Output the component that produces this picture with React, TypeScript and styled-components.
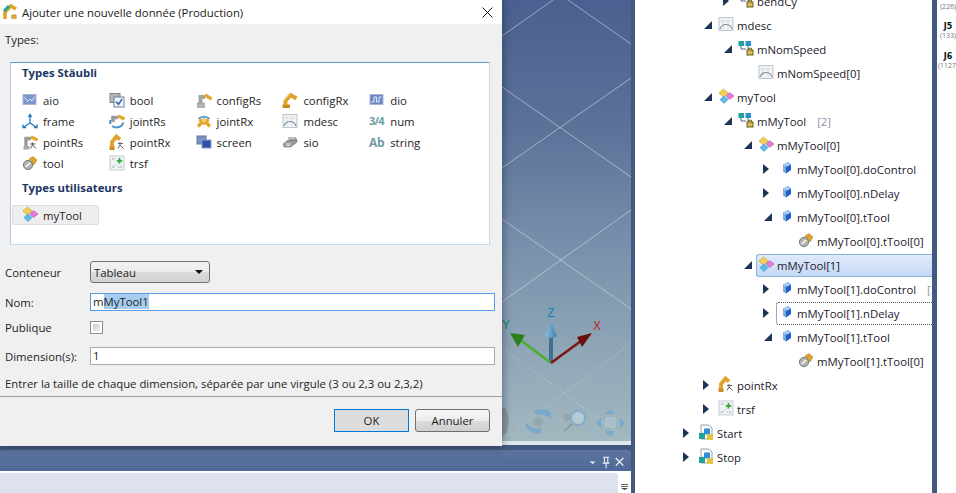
import React from 'react'
import styled, { createGlobalStyle } from 'styled-components'

const GlobalStyle = createGlobalStyle`
  html, body {
    margin: 0;
    padding: 0;
    background: #fff;
  }
  body {
    font-family: "Open Sans", "Noto Sans", "Liberation Sans", sans-serif;
    font-size: 11.35px;
    color: #1e1e1e;
  }
`

const Page = styled.div`
  display: flex;
  width: 956px;
  height: 493px;
  overflow: hidden;
  background: #44597f;
`

const LeftColumn = styled.div`
  position: relative;
  display: flex;
  flex-direction: column;
  width: 631px;
  flex: none;
`

const Viewport = styled.div`
  position: relative;
  flex: 1;
  border-bottom: 4px solid #dfe7ec;
  background: linear-gradient(180deg, #4a6090 0%, #5b7399 30%, #7a93ad 58%, #a2b8c0 100%);
  overflow: hidden;
`

const SceneSvg = styled.svg`
  position: absolute;
  top: 0;
  left: 0;
`

const DockTitle = styled.div`
  margin-top: 5px;
  height: 21px;
  flex: none;
  display: flex;
  align-items: center;
  justify-content: flex-end;
  padding-right: 2px;
  gap: 3px;
  border-radius: 3px 3px 0 0;
  background: linear-gradient(180deg, #5d749f, #4f6997);
  border-bottom: 1px solid #fff;
`

const DockBody = styled.div`
  display: flex;
  height: 20px;
  flex: none;
  background: #fff;
  padding-top: 1px;
`

const DockContent = styled.div`
  width: 618px;
  background: #dee2ee;
  border-radius: 0 3px 0 0;
`

const DockScroll = styled.div`
  flex: 1;
  display: flex;
  justify-content: center;
  padding-top: 11px;
`

const Dialog = styled.div`
  position: absolute;
  top: 0;
  left: 0;
  z-index: 2;
  width: 502px;
  height: 446px;
  background: #f0f0f0;
  box-shadow: 0 0 9px rgba(20, 30, 50, 0.55);
  display: flex;
  flex-direction: column;
`

const TitleBar = styled.div`
  height: 24px;
  flex: none;
  background: #fff;
  display: flex;
  align-items: center;
  padding-left: 3px;
  gap: 4px;
`

const TitleText = styled.span`
  flex: 1;
  color: #1a1a1a;
`

const CloseButton = styled.div`
  width: 11px;
  height: 11px;
  margin-right: 9px;
  display: flex;
`

const DialogBody = styled.div`
  flex: none;
  display: flex;
  flex-direction: column;
  padding: 0 7px 0 5px;
`

const TypesLabel = styled.div`
  height: 38px;
  line-height: 32px;
  flex: none;
`

const TypesPanel = styled.div`
  margin-left: 5px;
  margin-right: 5px;
  height: 183px;
  box-sizing: border-box;
  flex: none;
  background: #fff;
  border: 1px solid #c5dcee;
  border-top-color: #5f9dcf;
  border-left-color: #a9cbe6;
  padding-left: 11px;
`

const GroupTitle = styled.div<{ $top: number }>`
  margin-top: ${(p) => p.$top}px;
  height: 20px;
  line-height: 20px;
  font-weight: 700;
  color: #1d3564;
`

const TypeGrid = styled.div`
  margin-top: 7px;
  display: grid;
  grid-template-columns: repeat(5, 86.8px);
  grid-auto-rows: 21px;
`

const TypeItem = styled.div`
  display: flex;
  align-items: center;
  gap: 5px;
`

const UserTypeButton = styled.div`
  margin: 7px 0 0 -10px;
  width: 87px;
  height: 20px;
  box-sizing: border-box;
  display: flex;
  align-items: center;
  gap: 5px;
  padding-left: 9px;
  border: 1px solid #dcdcdc;
  border-radius: 2px;
  background: #eeeeee;
`

const FormRow = styled.div<{ $top: number }>`
  margin-top: ${(p) => p.$top}px;
  display: grid;
  grid-template-columns: 85px 405px;
  align-items: center;
  line-height: 13px;
`

const ComboBox = styled.div`
  width: 120px;
  height: 22px;
  box-sizing: border-box;
  display: flex;
  align-items: center;
  justify-content: space-between;
  padding: 0 6px 0 3px;
  border: 1px solid #707070;
  border-radius: 3px;
  background: linear-gradient(180deg, #f2f2f2 0%, #ebebeb 50%, #dcdcdc 50%, #d2d2d2 100%);
`

const ComboArrow = styled.span`
  width: 0;
  height: 0;
  border-left: 4px solid transparent;
  border-right: 4px solid transparent;
  border-top: 4px solid #111;
`

const TextField = styled.div<{ $focused?: boolean }>`
  height: 18px;
  box-sizing: border-box;
  background: #fff;
  border: 1px solid ${(p) => (p.$focused ? '#569de5' : '#ababab')};
  padding-left: 2px;
  line-height: 16px;
  white-space: nowrap;
`

const Selection = styled.span`
  background: #a6cdf0;
`

const CheckBox = styled.div`
  width: 13px;
  height: 13px;
  box-sizing: border-box;
  border: 1px solid #8e8f8f;
  background: #fff;
  padding: 2px;
  &::after {
    content: '';
    display: block;
    height: 100%;
    background: linear-gradient(135deg, #c9cdd3, #eceef1);
  }
`

const Hint = styled.div`
  margin-top: 10px;
  height: 18px;
  line-height: 18px;
  flex: none;
  white-space: nowrap;
`

const DialogFooter = styled.div`
  margin-top: 3px;
  flex: 1;
  border-top: 1px solid #a0a0a0;
  display: flex;
  justify-content: flex-end;
  align-items: flex-start;
  gap: 6px;
  padding: 12px 12px 0 0;
`

const DialogButton = styled.div<{ $default?: boolean }>`
  width: 75px;
  height: 23px;
  box-sizing: border-box;
  display: flex;
  align-items: center;
  justify-content: center;
  border: 1px solid ${(p) => (p.$default ? '#0078d7' : '#707070')};
  border-radius: ${(p) => (p.$default ? '0' : '3px')};
  background: ${(p) =>
    p.$default
      ? '#dddddd'
      : 'linear-gradient(180deg, #f6f6f6 0%, #ececec 50%, #dcdcdc 50%, #cfcfcf 100%)'};
`

const TreePane = styled.div`
  width: 297px;
  margin-left: 4px;
  flex: none;
  background: #fff;
  overflow: hidden;
`

const TreeList = styled.div`
  margin-top: -11px;
`

const TreeRow = styled.div<{ $level: number }>`
  height: 24px;
  box-sizing: border-box;
  display: flex;
  align-items: center;
  white-space: nowrap;
  padding-left: ${(p) => 48 + p.$level * 20}px;
  color: #1d1a2c;
`

const Expander = styled.span<{ $open?: boolean; $leaf?: boolean }>`
  width: 15px;
  flex: none;
  display: flex;
  &::before {
    content: '';
    display: ${(p) => (p.$leaf ? 'none' : 'block')};
    width: 0;
    height: 0;
    ${(p) =>
      p.$open
        ? `margin-left: 1px;
           border-left: 8px solid transparent;
           border-bottom: 8px solid #1d3557;`
        : `border-top: 5px solid transparent;
           border-bottom: 5px solid transparent;
           border-left: 6px solid #1d3557;`}
  }
`

const RowLabel = styled.span<{ $state?: 'selected' | 'focus' }>`
  margin-left: -2px;
  flex: 1;
  height: 23px;
  box-sizing: border-box;
  display: flex;
  align-items: center;
  gap: 3px;
  padding-left: 1px;
  border: 1px solid transparent;
  border-right: none;
  border-radius: 3px 0 0 3px;
  ${(p) =>
    p.$state === 'selected'
      ? `border-color: #8db2dc;
         background: linear-gradient(180deg, #dfeafa, #c5d9f4);`
      : ''}
  ${(p) => (p.$state === 'focus' ? `border: 1px dotted #555; border-right: none;` : '')}
`

const RowValue = styled.span`
  color: #8a93a8;
`

const SideStrip = styled.div`
  margin-left: 5px;
  flex: 1;
  background: #fff;
  overflow: hidden;
  display: flex;
  flex-direction: column;
  align-items: center;
  padding-left: 3px;
  padding-top: 2px;
`

const Joint = styled.div`
  height: 30px;
  display: flex;
  flex-direction: column;
  align-items: center;
  white-space: nowrap;
  width: 16px;
  &:first-child {
    height: 20px;
  }
`

const JointName = styled.b`
  height: 9px;
  line-height: 9px;
  font-family: "DejaVu Sans", sans-serif;
  font-size: 8px;
  color: #111;
`

const JointValue = styled.span`
  height: 9px;
  line-height: 9px;
  font-size: 7px;
  color: #777;
`

const IconSvg = styled.svg`
  flex: none;
  margin-top: -2px;
`

const icons: Record<string, React.ReactNode> = {
  aio: (
    <>
      <rect x="1" y="2.5" width="13" height="10" fill="#7d95cc" stroke="#a9b6d3" />
      <path d="M2.5 5 L5.5 9.5 L8 7 L10 9 L13 4.5" fill="none" stroke="#dbe6f7" />
    </>
  ),
  dio: (
    <>
      <rect x="1" y="2.5" width="13" height="10" fill="#6d87c4" stroke="#a9b6d3" />
      <path d="M2.5 10 H5 V5 H7.5 V10 H10 V5 H12.5" fill="none" stroke="#e4ecf9" />
    </>
  ),
  bool: (
    <>
      <rect x="1" y="1.5" width="10" height="9" fill="#b4b8bd" stroke="#80858b" />
      <rect x="5" y="5" width="10" height="10" fill="#f4f6fa" stroke="#6c7f9f" />
      <path d="M7 9.5 L9.5 12.5 L13 7" fill="none" stroke="#3a66b0" strokeWidth="1.6" />
    </>
  ),
  configRs: (
    <>
      <rect x="1.5" y="11" width="7" height="4.5" fill="#b5b5b5" stroke="#8c8c8c" strokeWidth="0.6" />
      <path d="M4.5 12 V5 H9" fill="none" stroke="#a3a3a3" strokeWidth="4" />
      <path d="M9 3 L15.5 7" fill="none" stroke="#e0a92c" strokeWidth="3.4" />
    </>
  ),
  configRx: (
    <>
      <rect x="0.5" y="12.5" width="7.5" height="3.5" fill="#c88c1e" />
      <path d="M3.5 13 V9 L8.5 3 L14.5 6.5" fill="none" stroke="#e0a32a" strokeWidth="4" strokeLinejoin="round" />
      <path d="M2 9 L8 2" stroke="#f2ce72" strokeWidth="1" />
    </>
  ),
  frame: (
    <path
      d="M8 2 V10 M8 10 L2 14 M8 10 L14 14 M6.3 4 L8 1.5 L9.7 4 M1 11.5 V14.5 H4 M15 11.5 V14.5 H12"
      fill="none"
      stroke="#1f78c1"
      strokeWidth="1.3"
    />
  ),
  jointRs: (
    <>
      <path d="M4 9 V4.5 H9" fill="none" stroke="#9a9a9a" strokeWidth="3.6" />
      <path d="M9 3 L15.5 6" fill="none" stroke="#e0a92c" strokeWidth="3.2" />
      <path d="M14 9.5 A6.5 5 0 0 1 3 13 M1.5 7 A6 6 0 0 0 1.5 11" fill="none" stroke="#4a8fc9" strokeWidth="2" />
    </>
  ),
  jointRx: (
    <>
      <path d="M2.5 6 A6.5 5 0 0 1 13.5 6" fill="none" stroke="#5aa5dc" strokeWidth="2" />
      <path d="M2 13.5 L8 7 L14 13.5 M3.5 6.5 L8 10 L12.5 6.5" fill="none" stroke="#e3a92e" strokeWidth="3.4" />
      <circle cx="8" cy="7.5" r="2" fill="#f3d27a" />
    </>
  ),
  mdesc: (
    <>
      <rect x="1" y="1.5" width="14" height="13" fill="#f3f5f6" stroke="#bcc5cb" />
      <path d="M1 5 H15 M5 1.5 V14 M10 1.5 V14" stroke="#d8dde0" />
      <path d="M2 13 C4 7 12 7 14 13" fill="none" stroke="#84909a" strokeWidth="1.2" />
    </>
  ),
  pointRs: (
    <>
      <rect x="1.5" y="12" width="6" height="3.5" fill="#a8a8a8" />
      <path d="M4 12 V4.5 H9" fill="none" stroke="#9a9a9a" strokeWidth="3.4" />
      <path d="M9 3 L15.5 6" fill="none" stroke="#e0a92c" strokeWidth="3.2" />
      <path d="M10.5 8.5 V11 L8.5 14.5 M10.5 11 L14 14.5 M8 10 H13.5" fill="none" stroke="#555" />
    </>
  ),
  pointRx: (
    <>
      <rect x="0.5" y="12" width="5" height="4" fill="#c88c1e" />
      <path d="M3 13 V8 L7.5 2.5 L11 5.5" fill="none" stroke="#e0a32a" strokeWidth="3.8" />
      <path d="M11 8 V11 L9 14.5 M11 11 L14.5 14.5 M9 9.5 H14" fill="none" stroke="#666" />
    </>
  ),
  screen: (
    <>
      <rect x="1" y="2" width="9" height="8" fill="#7d90c4" stroke="#6078ad" />
      <rect x="6" y="6" width="9" height="8" fill="#2d52a5" stroke="#8c9cc6" />
    </>
  ),
  sio: (
    <>
      <path d="M1 10 L6 6 H15 V8 L9 13 H2 Z" fill="#9a9a9a" stroke="#777" strokeWidth="0.6" />
      <path d="M6 4 H14 V6 H7" fill="none" stroke="#777" />
      <path d="M3.5 10 H9 M4.5 11.5 H8" stroke="#e2e2e2" />
    </>
  ),
  tool: (
    <>
      <path d="M7 4 L11 1.5 L15 5 L12 10 Z" fill="#d9a52e" stroke="#b98a23" strokeWidth="0.6" />
      <circle cx="6" cy="10" r="4.6" fill="#b3b3b3" stroke="#777" />
      <path d="M3.8 12 L8 8" stroke="#fff" strokeWidth="1.4" />
    </>
  ),
  trsf: (
    <>
      <rect x="1" y="1" width="14" height="14" fill="#eef3f5" stroke="#c3ced3" />
      <path d="M3 4 H6 M3 12 H6 M9 12 H13" stroke="#8c9aa3" strokeDasharray="1.5 1" />
      <path d="M2.5 13 L13 5" stroke="#b6c3ca" strokeDasharray="1.5 1" />
      <path d="M10.5 3 V8.5 M7.8 5.8 H13.2" stroke="#37a838" strokeWidth="1.8" />
    </>
  ),
  num: (
    <text x="0" y="12" fontSize="11" fontWeight="700" letterSpacing="-0.8" fill="#6f9ba3">
      3/4
    </text>
  ),
  string: (
    <text x="0" y="12.5" fontSize="12" fontWeight="700" letterSpacing="-0.4" fill="#6f9ba3">
      Ab
    </text>
  ),
  struct: (
    <>
      <path d="M5.5 1 L10 5 L5.5 9 L1 5 Z" fill="#f3cf52" stroke="#b9962c" strokeWidth="0.6" />
      <path d="M11.5 4.5 L16 8 L11.5 11.5 L8 8 Z" fill="#e47bd8" stroke="#b357aa" strokeWidth="0.6" />
      <path d="M6 8 L10 11.5 L6 15.5 L2 11.5 Z" fill="#5cbcec" stroke="#3a8dbd" strokeWidth="0.6" />
    </>
  ),
  array: (
    <>
      <rect x="0.5" y="1" width="5.5" height="5" fill="#1ea69a" />
      <rect x="7.5" y="1" width="5.5" height="5" fill="#2f8fd3" />
      <path d="M3 6 V9 H8 M10 6 V9" fill="none" stroke="#5a6b75" />
      <rect x="9" y="10" width="6" height="5" fill="#d9bd55" stroke="#6e5c1f" />
      <path d="M10.5 10 V8.3 H13.5 V10" fill="none" stroke="#6e5c1f" />
    </>
  ),
  field: (
    <>
      <path d="M5 5 L10 2 L13 4.5 V10 L8 13.5 L5 11 Z" fill="#1f5fc4" />
      <path d="M5 5 L10 2 L13 4.5 L8 7 Z" fill="#9fcdf3" />
      <path d="M8 7 V13.5 L5 11 V5 Z" fill="#78abe6" />
    </>
  ),
  program: (
    <>
      <path d="M3 1 H11 L14 4 V15 H3 Z" fill="#fafafa" stroke="#98a2ab" />
      <rect x="6" y="4.5" width="6" height="6" fill="#2f8fd3" />
      <rect x="1" y="9" width="6" height="6" fill="#1ea69a" />
      <rect x="9" y="10" width="6" height="6" fill="#e7c33d" />
    </>
  ),
}

const Icon: React.FC<{ kind: string }> = ({ kind }) => (
  <IconSvg width="16" height="16" viewBox="0 0 16 16">
    {icons[kind]}
  </IconSvg>
)

const AppIcon = () => (
  <svg width="15" height="16" viewBox="0 0 15 16">
    <path d="M2 15 V8 L8 2 L13 5" fill="none" stroke="#e0a32a" strokeWidth="3.6" />
    <path d="M1 7 L6 2" stroke="#1ea69a" strokeWidth="3" />
    <path d="M9 15 V11 H13 V15" fill="#e8b544" stroke="#b98a23" />
  </svg>
)

const Triad = () => (
  <SceneSvg width="631" height="443" viewBox="0 0 631 443">
    <defs>
      <linearGradient id="zcone" x1="0" x2="1" y1="0" y2="0">
        <stop offset="0" stopColor="#8ec0e0" />
        <stop offset="1" stopColor="#3f7eaa" />
      </linearGradient>
    </defs>
    <g stroke="#d8dcd8" strokeOpacity="0.75" strokeWidth="0.8" fill="none">
      <path d="M502 36 L553 0 M568 0 L631 44 M502 87 L631 177 M631 78 L502 168" />
      <path d="M502 219 L631 309 M631 210 L502 302" />
    </g>
    <g stroke="#d8d4c8" strokeOpacity="0.6" strokeWidth="0.9" strokeDasharray="2 2" fill="none">
      <path d="M502 348 L631 442 M631 343 L507 437" />
    </g>
    <path d="M549 336 H553 V363 H549 Z" fill="#3e6f95" />
    <path d="M551 322 L557 336 Q551 340 545 336 Z" fill="url(#zcone)" />
    <path d="M551 363 L515 336" stroke="#49b022" strokeWidth="2.2" />
    <path d="M510 333 L525 335 L518 347 Z" fill="#2f7f17" />
    <path d="M551 363 L585 338" stroke="#7c1414" strokeWidth="2.4" />
    <path d="M592 333 L577 337 L582 347 Z" fill="#6c0d0d" />
    <text x="551" y="317" fontSize="12" textAnchor="middle" fill="#0a86b4" fontFamily="Liberation Sans">Z</text>
    <text x="506" y="329" fontSize="12" textAnchor="middle" fill="#0b8a55" fontFamily="Liberation Sans">Y</text>
    <text x="597" y="330" fontSize="12" textAnchor="middle" fill="#b3261a" fontFamily="Liberation Sans">X</text>
    <g opacity="0.55">
      <path d="M502 408 H506 L509 418 L507 432 L502 436 Z" fill="#7d7f7e" />
      <circle cx="538" cy="422" r="4.5" fill="#8f9ea2" />
      <path d="M534 411 A13 10 0 0 1 551 412 L551 419 A12 9 0 0 0 537 415 Z" fill="#5f9fd6" />
      <path d="M541 433 A13 10 0 0 1 526 427 L526 420 A12 9 0 0 0 542 428 Z" fill="#5f9fd6" />
      <circle cx="578" cy="418" r="7" fill="#cfe0ea" stroke="#6fa8d6" strokeWidth="2" />
      <path d="M572 424 L564 431" stroke="#7e8b8f" strokeWidth="2" />
      <path d="M564 414 H570 V419 L567 422 L563 419 Z" fill="#8c9aa0" />
      <rect x="605" y="417" width="11" height="11" fill="#b4cad4" />
      <path d="M610 409 L615 414 H605 Z M610 437 L615 431 H605 Z M596 423 L601 418 V428 Z M625 423 L620 418 V428 Z" fill="#5a9fd6" />
    </g>
  </SceneSvg>
)

const TYPES = [
  'aio', 'bool', 'configRs', 'configRx', 'dio',
  'frame', 'jointRs', 'jointRx', 'mdesc', 'num',
  'pointRs', 'pointRx', 'screen', 'sio', 'string',
  'tool', 'trsf',
]

type NodeData = {
  level: number
  icon: string
  label: string
  value?: string
  valueGap?: number
  exp?: 'open' | 'closed'
  state?: 'selected' | 'focus'
}

const TREE: NodeData[] = [
  { level: 2, icon: 'array', label: 'bendCy', exp: 'closed' },
  { level: 1, icon: 'mdesc', label: 'mdesc', exp: 'open' },
  { level: 2, icon: 'array', label: 'mNomSpeed', exp: 'open' },
  { level: 3, icon: 'mdesc', label: 'mNomSpeed[0]' },
  { level: 1, icon: 'struct', label: 'myTool', exp: 'open' },
  { level: 2, icon: 'array', label: 'mMyTool', exp: 'open', value: '[2]', valueGap: 8 },
  { level: 3, icon: 'struct', label: 'mMyTool[0]', exp: 'open' },
  { level: 4, icon: 'field', label: 'mMyTool[0].doControl', exp: 'closed' },
  { level: 4, icon: 'field', label: 'mMyTool[0].nDelay', exp: 'closed' },
  { level: 4, icon: 'field', label: 'mMyTool[0].tTool', exp: 'open' },
  { level: 5, icon: 'tool', label: 'mMyTool[0].tTool[0]' },
  { level: 3, icon: 'struct', label: 'mMyTool[1]', exp: 'open', state: 'selected' },
  { level: 4, icon: 'field', label: 'mMyTool[1].doControl', exp: 'closed', value: '[3', valueGap: 8 },
  { level: 4, icon: 'field', label: 'mMyTool[1].nDelay', exp: 'closed', state: 'focus' },
  { level: 4, icon: 'field', label: 'mMyTool[1].tTool', exp: 'open' },
  { level: 5, icon: 'tool', label: 'mMyTool[1].tTool[0]' },
  { level: 1, icon: 'pointRx', label: 'pointRx', exp: 'closed' },
  { level: 1, icon: 'trsf', label: 'trsf', exp: 'closed' },
  { level: 0, icon: 'program', label: 'Start', exp: 'closed' },
  { level: 0, icon: 'program', label: 'Stop', exp: 'closed' },
]

const JOINTS = [
  { name: '', value: '(226)' },
  { name: 'J5', value: '(133)' },
  { name: 'J6', value: '(1127)' },
]

const App: React.FC = () => {
  return (
    <Page>
      <GlobalStyle />
      <LeftColumn>
        <Viewport>
          <Triad />
        </Viewport>
        <DockTitle>
          <svg width="50" height="16" viewBox="0 0 50 19">
            <path d="M8 10 H15 L11.5 13 Z" fill="#eef1f6" />
            <path d="M24 5 H31 M25.5 5 V12 H29.5 V5 M23.5 12 H31.5 M27.5 12 V18" fill="none" stroke="#eef1f6" strokeWidth="1.3" />
            <path d="M39 6 L48 15 M48 6 L39 15" stroke="#eef1f6" strokeWidth="1.6" />
          </svg>
        </DockTitle>
        <DockBody>
          <DockContent />
          <DockScroll>
            <svg width="7" height="6" viewBox="0 0 7 6">
              <path d="M0 0.5 H7 M0 2.5 H7" stroke="#666" />
              <path d="M0 4 H7 L3.5 6 Z" fill="#444" />
            </svg>
          </DockScroll>
        </DockBody>
        <Dialog>
          <TitleBar>
            <AppIcon />
            <TitleText>Ajouter une nouvelle donnée (Production)</TitleText>
            <CloseButton>
              <svg width="11" height="11" viewBox="0 0 11 11">
                <path d="M0.5 0.5 L10.5 10.5 M10.5 0.5 L0.5 10.5" stroke="#111" strokeWidth="1" />
              </svg>
            </CloseButton>
          </TitleBar>
          <DialogBody>
            <TypesLabel>Types:</TypesLabel>
            <TypesPanel>
              <GroupTitle $top={0}>Types Stäubli</GroupTitle>
              <TypeGrid>
                {TYPES.map((t) => (
                  <TypeItem key={t}>
                    <Icon kind={t} />
                    {t}
                  </TypeItem>
                ))}
              </TypeGrid>
              <GroupTitle $top={4}>Types utilisateurs</GroupTitle>
              <UserTypeButton>
                <Icon kind="struct" />
                myTool
              </UserTypeButton>
            </TypesPanel>
            <FormRow $top={16}>
              Conteneur
              <ComboBox>
                Tableau
                <ComboArrow />
              </ComboBox>
            </FormRow>
            <FormRow $top={10}>
              Nom:
              <TextField $focused>
                m<Selection>MyTool1</Selection>
              </TextField>
            </FormRow>
            <FormRow $top={10}>
              Publique
              <CheckBox />
            </FormRow>
            <FormRow $top={13}>
              Dimension(s):
              <TextField>1</TextField>
            </FormRow>
            <Hint>Entrer la taille de chaque dimension, séparée par une virgule (3 ou 2,3 ou 2,3,2)</Hint>
          </DialogBody>
          <DialogFooter>
            <DialogButton $default>OK</DialogButton>
            <DialogButton>Annuler</DialogButton>
          </DialogFooter>
        </Dialog>
      </LeftColumn>
      <TreePane>
        <TreeList>
          {TREE.map((n) => (
            <TreeRow key={n.label} $level={n.level}>
              <Expander $open={n.exp === 'open'} $leaf={!n.exp} />
              <RowLabel $state={n.state}>
                <Icon kind={n.icon} />
                {n.label}
                {n.value && <RowValue style={{ marginLeft: n.valueGap }}>{n.value}</RowValue>}
              </RowLabel>
            </TreeRow>
          ))}
        </TreeList>
      </TreePane>
      <SideStrip>
        {JOINTS.map((j) => (
          <Joint key={j.value}>
            {j.name && <JointName>{j.name}</JointName>}
            <JointValue>{j.value}</JointValue>
          </Joint>
        ))}
      </SideStrip>
    </Page>
  )
}

export default App
